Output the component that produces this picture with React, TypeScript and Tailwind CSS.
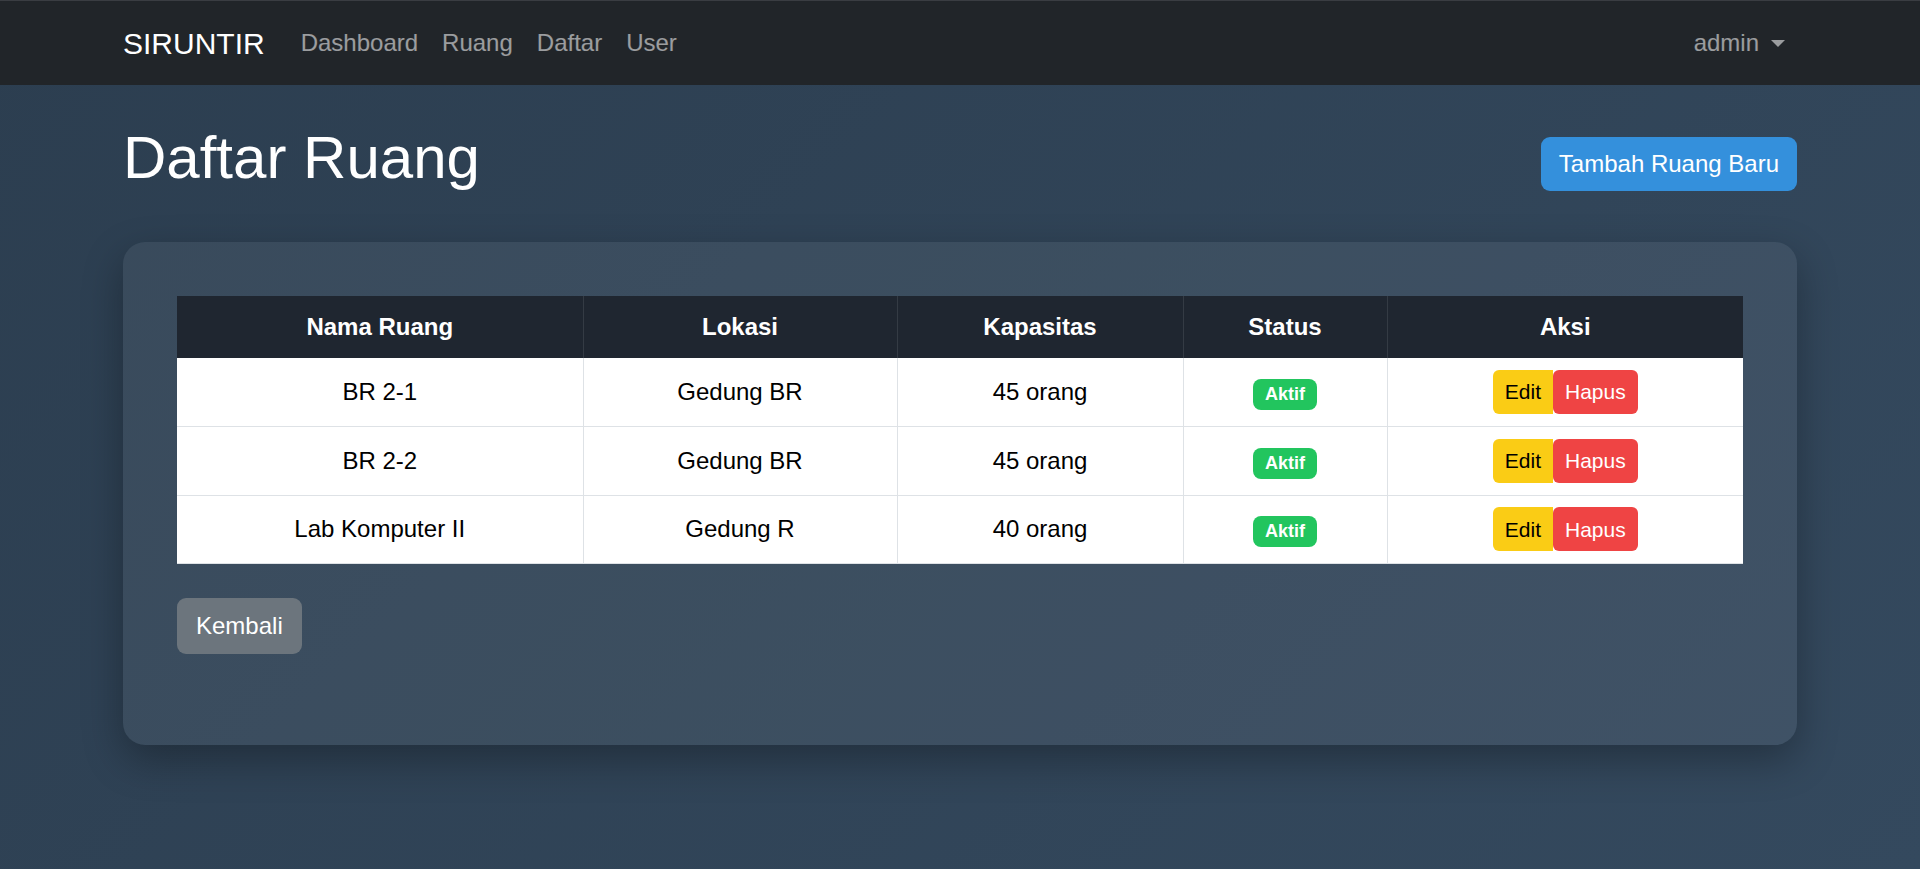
const rooms = [
  { nama: "BR 2-1", lokasi: "Gedung BR", kapasitas: "45 orang" },
  { nama: "BR 2-2", lokasi: "Gedung BR", kapasitas: "45 orang" },
  { nama: "Lab Komputer II", lokasi: "Gedung R", kapasitas: "40 orang" },
];

export default function App() {
  return (
    <div
      className="min-h-screen bg-[linear-gradient(135deg,#2c3e50_0%,#34495e_100%)]"
      style={{ fontFamily: '"Liberation Sans", Arial, sans-serif' }}
    >
      {/* Navbar */}
      <nav className="h-[85px] bg-[#212529] border-t border-[#3a3d42]">
        <div className="mx-auto w-[1710px] px-[18px] h-full flex items-center justify-between">
          <div className="flex items-center">
            <span className="text-[30px] text-white mr-[24px]">SIRUNTIR</span>
            <a className="px-[12px] text-[24px] text-white/55">Dashboard</a>
            <a className="px-[12px] text-[24px] text-white/55">Ruang</a>
            <a className="px-[12px] text-[24px] text-white/55">Daftar</a>
            <a className="px-[12px] text-[24px] text-white/55">User</a>
          </div>
          <a className="px-[12px] text-[24px] text-white/55 flex items-center">
            admin
            <span className="ml-[12px] w-0 h-0 border-x-[7px] border-x-transparent border-t-[7px] border-t-white/55"></span>
          </a>
        </div>
      </nav>

      <main className="mx-auto w-[1710px] px-[18px]">
        {/* Header */}
        <div className="mt-[37px] mb-[36px] flex items-center justify-between">
          <h1 className="text-[60px] leading-[72px] text-white mb-[12px]">Daftar Ruang</h1>
          <button className="h-[54px] px-[18px] rounded-[9px] bg-[#3490dc] text-white text-[24px]">
            Tambah Ruang Baru
          </button>
        </div>

        {/* Card */}
        <div className="rounded-[22px] bg-white/[0.06] shadow-[0_15px_40px_rgba(0,0,0,0.3)] pt-[54px] px-[54px] pb-[91px]">
          <table className="w-full border-collapse text-[24px]">
            <thead>
              <tr className="h-[62px] bg-[#1f2630] text-white">
                <th className="w-[406px] font-bold border-r border-[#343b44]">Nama Ruang</th>
                <th className="w-[314px] font-bold border-r border-[#343b44]">Lokasi</th>
                <th className="w-[286px] font-bold border-r border-[#343b44]">Kapasitas</th>
                <th className="w-[204px] font-bold border-r border-[#343b44]">Status</th>
                <th className="font-bold">Aksi</th>
              </tr>
            </thead>
            <tbody className="bg-white text-black">
              {rooms.map((r) => (
                <tr key={r.nama} className="h-[68.5px] border-b border-[#dee2e6]">
                  <td className="text-center border-r border-[#dee2e6]">{r.nama}</td>
                  <td className="text-center border-r border-[#dee2e6]">{r.lokasi}</td>
                  <td className="text-center border-r border-[#dee2e6]">{r.kapasitas}</td>
                  <td className="text-center border-r border-[#dee2e6]">
                    <span className="inline-flex items-center h-[31px] px-[12px] rounded-[8px] bg-[#22c55e] text-white font-bold text-[18px]">
                      Aktif
                    </span>
                  </td>
                  <td className="text-center">
                    <div className="inline-flex">
                      <button className="h-[44px] px-[12px] rounded-l-[6px] bg-[#facc15] text-black text-[21px]">Edit</button>
                      <button className="h-[44px] px-[12px] rounded-[6px] bg-[#ef4444] text-white text-[21px]">Hapus</button>
                    </div>
                  </td>
                </tr>
              ))}
            </tbody>
          </table>

          <button className="mt-[34px] h-[56px] px-[19px] rounded-[9px] bg-[#6c757d] text-white text-[24px]">
            Kembali
          </button>
        </div>
      </main>
    </div>
  );
}
